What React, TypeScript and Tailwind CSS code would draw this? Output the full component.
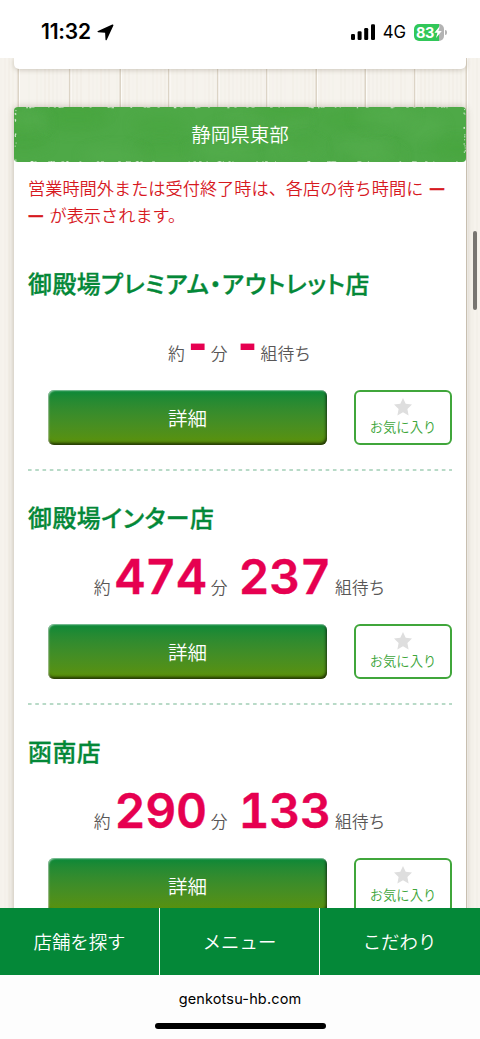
import React from 'react'
import clsx from 'clsx'

interface Store {
  name: string
  minutes: string
  groups: string
}

const stores: Store[] = [
  { name: '御殿場プレミアム・アウトレット店', minutes: '-', groups: '-' },
  { name: '御殿場インター店', minutes: '474', groups: '237' },
  { name: '函南店', minutes: '290', groups: '133' },
]

const navItems = ['店舗を探す', 'メニュー', 'こだわり']

const plankEdges = [18.5, 70, 120.5, 169, 218, 267, 316.5, 365.5, 415, 466.5]

// Repeatable pseudo-random numbers for the worn edges of the banner
const noise = (n: number) => {
  const v = Math.sin(n * 127.1 + 3.7) * 43758.5453
  return v - Math.floor(v)
}

const WoodBackground = () => (
  <svg className="absolute inset-0 h-full w-full" preserveAspectRatio="none" viewBox="0 0 480 850">
    <rect width="480" height="850" fill="#f6f3ed" />
    {Array.from({ length: 120 }, (_, i) => (
      <rect key={i} x={i * 4} y="0" width="2" height="850" fill="#e9e3d8" opacity={noise(i) * 0.25} />
    ))}
    {plankEdges.map((x) => (
      <g key={x}>
        <rect x={x - 1} y="0" width="1.5" height="850" fill="#dcd4c6" />
        <rect x={x + 0.5} y="0" width="1" height="850" fill="#fdfcf9" />
      </g>
    ))}
  </svg>
)

const BannerTexture = () => (
  <svg className="absolute inset-0 h-full w-full" viewBox="0 0 452 55" preserveAspectRatio="none">
    <defs>
      <filter id="soft" x="-40%" y="-80%" width="180%" height="260%">
        <feGaussianBlur stdDeviation="6" />
      </filter>
    </defs>
    {Array.from({ length: 26 }, (_, i) => (
      <ellipse
        key={i}
        cx={noise(i) * 452}
        cy={noise(i + 50) * 55}
        rx={14 + noise(i + 90) * 20}
        ry={6 + noise(i + 130) * 8}
        fill={i % 2 ? '#57ae50' : '#47a53e'}
        opacity="0.5"
        filter="url(#soft)"
      />
    ))}
    {Array.from({ length: 110 }, (_, i) => (
      <rect
        key={i}
        x={noise(i + 200) * 450}
        y={i % 2 ? 0 : 54.2}
        width={0.8 + noise(i + 400) * 2}
        height={noise(i + 600) > 0.85 ? 1.3 : 0.7}
        fill="#e9f3e6"
        opacity="0.7"
      />
    ))}
    {Array.from({ length: 26 }, (_, i) => (
      <rect
        key={i}
        x={(i % 2 ? 0.3 : 449.5) + noise(i + 800) * 1.3}
        y={noise(i + 900) * 53}
        width="1"
        height={1 + noise(i + 950)}
        fill="#e9f3e6"
        opacity="0.8"
      />
    ))}
  </svg>
)

const StatusBar = () => (
  <header className="relative z-20 flex h-[58px] shrink-0 items-start justify-between bg-white pl-[41px] pr-[33px] pt-[22px] font-['Inter',sans-serif] text-black">
    <div className="flex h-5 items-center gap-[6px]">
      <span className="text-[21px] font-semibold leading-5 tracking-[-0.2px]">11:32</span>
      <svg width="17" height="17" viewBox="0 0 17 17">
        <path
          d="M15.3 0.5 L1 6.9 Q-0.2 7.6 1.1 8.3 L8.1 8.7 L8.5 15.7 Q9.1 17 9.8 15.7 L16.4 1.6 Q16.6 0.2 15.3 0.5 Z"
          fill="currentColor"
        />
      </svg>
    </div>
    <div className="flex h-5 items-center">
      <svg width="24" height="16" viewBox="0 0 24 16">
        <rect x="0" y="10" width="4" height="6" rx="1.2" />
        <rect x="6.6" y="7.3" width="4" height="8.7" rx="1.2" />
        <rect x="13.2" y="4" width="4" height="12" rx="1.2" />
        <rect x="20" y="0.3" width="4" height="15.7" rx="1.2" />
      </svg>
      <span className="ml-2 text-[16.8px] font-normal leading-5">4G</span>
      <div className="ml-[8px] flex h-[17px] w-[30px] items-center overflow-hidden rounded-[5px] bg-linear-to-r from-[#31c759] from-84% to-[#b3b3b3] to-84% pl-[2px] text-white">
        <span className="text-[14.5px] font-bold leading-[17px] tracking-[-0.5px]">83</span>
        <svg width="8" height="12" viewBox="0 0 8 12">
          <path d="M5.8 0 L0.4 6.8 H3.4 L2 12 L7.8 5 H4.6 Z" fill="white" />
        </svg>
      </div>
      <div className="ml-[1px] h-[5px] w-[2px] rounded-r-full bg-[#b3b3b3]" />
    </div>
  </header>
)

const WaitValue = ({ value }: { value: string }) => (
  <span
    className={clsx(
      'text-[#e60050]',
      value === '-'
        ? "w-[18px] text-center font-['Liberation_Sans',sans-serif] text-[54px] font-bold leading-[54px]"
        : "font-['Inter',sans-serif] text-[48px] font-semibold leading-[58px] tracking-[-0.3px] tabular-nums [-webkit-text-stroke:0.4px_#e60050]"
    )}
  >
    {value === '-' ? <span className="relative top-px">-</span> : value}
  </span>
)

const StoreItem = ({ store }: { store: Store }) => (
  <section className="h-[234px]">
    <div className="flex h-[233px] flex-col pt-[31px]">
      <h2 className="whitespace-nowrap text-[23.8px] font-medium leading-8 tracking-[0.6px] text-[#048838] [-webkit-text-stroke:0.35px_#048838] [font-feature-settings:'palt']">
        {store.name}
      </h2>
      <div className="flex h-[91px] items-baseline justify-center gap-x-[4px] pr-px pt-[15px] text-[16.8px] text-[#595757]">
        <span>約</span>
        <WaitValue value={store.minutes} />
        <span className="mr-[7px]">分</span>
        <WaitValue value={store.groups} />
        <span>組待ち</span>
      </div>
      <div className="flex justify-between pl-5">
        <button className="h-[55px] w-[279px] rounded-[6px] bg-linear-to-b from-[#048838] to-[#5c9204] text-[19.5px] font-[350] text-white shadow-[inset_1px_1px_1.5px_rgba(255,255,255,0.55),inset_-1px_-2px_3px_rgba(0,0,0,0.65)]">
          詳細
        </button>
        <button className="flex h-[55px] w-[98px] flex-col items-center rounded-[6px] border-2 border-[#40a63b] bg-white pt-[6px] text-[#40a63b]">
          <svg width="18" height="18" viewBox="0 0 18 18">
            <path
              d="M9 0 L11.7 5.8 L18 6.6 L13.4 11 L14.6 17.4 L9 14.3 L3.4 17.4 L4.6 11 L0 6.6 L6.3 5.8 Z"
              fill="#dedede"
            />
          </svg>
          <span className="mt-[2px] text-[13.3px] font-[350] leading-[18px]">お気に入り</span>
        </button>
      </div>
    </div>
    <svg className="block h-[2px] w-full">
      <line x1="0" y1="1" x2="424" y2="1" stroke="#b8dac7" strokeWidth="1.8" strokeDasharray="3.6 3.66" />
    </svg>
  </section>
)

export default function App() {
  return (
    <div className="flex h-[1039px] w-[480px] flex-col overflow-hidden bg-white font-['Noto_Sans_CJK_JP',sans-serif] font-[350]">
      <StatusBar />

      <main className="relative h-[850px] shrink-0 overflow-hidden">
        <WoodBackground />
        <div className="relative mx-auto h-[11px] w-[452px] rounded-b-[5px] bg-white shadow-[0_1px_5px_rgba(80,65,40,0.25)]" />

        <article className="relative mx-auto mt-[38px] w-[452px] rounded-t-[5px] bg-white shadow-[0_0_7px_rgba(80,65,40,0.3)]">
          <h1 className="relative flex h-[55px] items-center justify-center overflow-hidden rounded-[4px] bg-[#4ea947] pb-[2px] text-[19.5px] text-white">
            <BannerTexture />
            <span className="relative">静岡県東部</span>
          </h1>
          <div className="px-[14px]">
            <p className="h-[74px] whitespace-nowrap pt-[12px] text-[17.2px] leading-[27px] text-[#d7191f]">
              営業時間外または受付終了時は、各店の待ち時間に{' '}
              <span className="relative -top-px ml-[2px] font-bold [-webkit-text-stroke:0.6px_#d7191f]">—</span>
              <br />
              <span className="relative -top-px mr-[2px] font-bold [-webkit-text-stroke:0.6px_#d7191f]">—</span>{' '}
              が表示されます。
            </p>
            {stores.map((store) => (
              <StoreItem key={store.name} store={store} />
            ))}
          </div>
        </article>

        <div className="absolute right-[3px] top-[173px] h-[79px] w-[4px] rounded-full bg-[#777571]" />
      </main>

      <nav className="flex h-[67px] shrink-0 bg-[#048838] pr-px text-[18.4px] text-white">
        {navItems.map((item) => (
          <a
            key={item}
            className="flex flex-1 items-center justify-center border-r border-white last:border-r-0"
          >
            {item}
          </a>
        ))}
      </nav>

      <footer className="flex h-16 shrink-0 flex-col items-center bg-[#fdfdfd] pt-[14px] font-['Inter',sans-serif] font-normal text-black">
        <span className="text-[14.5px] leading-5 tracking-[0.15px]">genkotsu-hb.com</span>
        <div className="mt-[14px] h-[6px] w-[171px] rounded-full bg-black" />
      </footer>
    </div>
  )
}
